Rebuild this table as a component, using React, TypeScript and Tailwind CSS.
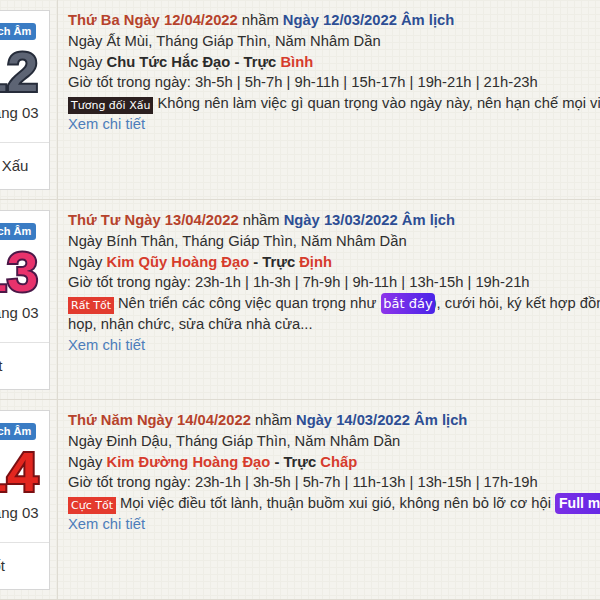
import React from "react";

type Day = {
  weekday: string;
  solar: string;
  lunar: string;
  canchi: string;
  dao: string;
  daoGood: boolean;
  truc: string;
  hours: string;
  num: string;
  numClass: string;
  verdict: string;
  badge: string;
  badgeClass: string;
  desc: React.ReactNode;
  extra?: React.ReactNode;
};

const days: Day[] = [
  {
    weekday: "Thứ Ba",
    solar: "12/04/2022",
    lunar: "12/03/2022",
    canchi: "Ngày Ất Mùi, Tháng Giáp Thìn, Năm Nhâm Dần",
    dao: "Chu Tức Hắc Đạo",
    daoGood: false,
    truc: "Bình",
    hours: "3h-5h | 5h-7h | 9h-11h | 15h-17h | 19h-21h | 21h-23h",
    num: "12",
    numClass: "text-[#5d6474] [-webkit-text-stroke:4px_#262c3a]",
    verdict: "Tương đối Xấu",
    badge: "Tương đối Xấu",
    badgeClass: "bg-[#2b1f1f]",
    desc: "Không nên làm việc gì quan trọng vào ngày này, nên hạn chế mọi việc lớn",
  },
  {
    weekday: "Thứ Tư",
    solar: "13/04/2022",
    lunar: "13/03/2022",
    canchi: "Ngày Bính Thân, Tháng Giáp Thìn, Năm Nhâm Dần",
    dao: "Kim Qũy Hoàng Đạo",
    daoGood: true,
    truc: "Định",
    hours: "23h-1h | 1h-3h | 7h-9h | 9h-11h | 13h-15h | 19h-21h",
    num: "13",
    numClass: "text-[#e8326c] [-webkit-text-stroke:4px_#4b1848]",
    verdict: "Rất Tốt",
    badge: "Rất Tốt",
    badgeClass: "bg-[#e23b2f]",
    desc: (
      <>
        Nên triển các công việc quan trọng như (
        <span className="relative ml-[-4px] inline-block rounded-[4px] bg-[linear-gradient(90deg,#8d34ea,#4a24e8)] px-[2px] text-[13px] leading-[21px] text-white font-['DejaVu_Sans',sans-serif]">
          bắt đáy
        </span>
        <span className="ml-[-3px]">)</span>, cưới hỏi, ký kết hợp đồng, hội
      </>
    ),
    extra: <div>họp, nhận chức, sửa chữa nhà cửa...</div>,
  },
  {
    weekday: "Thứ Năm",
    solar: "14/04/2022",
    lunar: "14/03/2022",
    canchi: "Ngày Đinh Dậu, Tháng Giáp Thìn, Năm Nhâm Dần",
    dao: "Kim Đường Hoàng Đạo",
    daoGood: true,
    truc: "Chấp",
    hours: "23h-1h | 3h-5h | 5h-7h | 11h-13h | 13h-15h | 17h-19h",
    num: "14",
    numClass: "text-[#e3261f] [-webkit-text-stroke:4px_#7a0f12]",
    verdict: "Cực Tốt",
    badge: "Cực Tốt",
    badgeClass: "bg-[#e43a2d]",
    desc: (
      <>
        Mọi việc điều tốt lành, thuận buồm xui gió, không nên bỏ lỡ cơ hội{" "}
        <span className="inline-block rounded-[4px] bg-[linear-gradient(90deg,#7a2fe6,#5a25e4)] px-[4px] text-[14px] font-bold leading-[21px] text-white">
          Full moon
        </span>
      </>
    ),
  },
];

function DayRow({ d }: { d: Day }) {
  return (
    <div className="flex h-[200px] border-b border-[#dedbd2]">
      {/* left date card, partly scrolled off screen */}
      <div className="w-[152px] shrink-0 border-r border-[#dedbd2] pl-[10px] pr-[8px] pt-[10px]">
        <div className="flex h-[180px] w-[134px] flex-col border border-[#d6d6d6] bg-white">
          <div className="flex h-[131px] flex-col items-center pl-[48px] pt-[12px]">
            <span className="ml-[5px] h-[17px] rounded-[3px] bg-[#3a7cc4] px-[5px] text-[11px] font-bold leading-[17px] text-white">
              Lịch Âm
            </span>
            <span
              className={`mt-[4px] text-[56px] font-bold leading-[56px] [paint-order:stroke_fill] ${d.numClass}`}
            >
              {d.num}
            </span>
            <span className="mt-[3px] text-[15px] leading-[20px] text-[#333]">Tháng 03</span>
          </div>
          <div className="flex flex-1 items-center justify-center border-t border-[#e2e2e2] pr-[10px] text-[15px] text-[#333]">
            {d.verdict}
          </div>
        </div>
      </div>

      <div className="flex-1 whitespace-nowrap pl-[10px] pt-[10px] text-[14.75px] leading-[20.8px] text-[#2f2f2f]">
        <div>
          <span className="font-bold text-[#b6422b]">
            {d.weekday} Ngày {d.solar}
          </span>{" "}
          nhầm <span className="font-bold text-[#2d4e94]">Ngày {d.lunar} Âm lịch</span>
        </div>
        <div>{d.canchi}</div>
        <div>
          Ngày{" "}
          <span className={`font-bold ${d.daoGood ? "text-[#d63b2c]" : "text-[#2b2b2b]"}`}>{d.dao}</span>
          <span className="font-bold text-[#2b2b2b]"> - Trực </span>
          <span className="font-bold text-[#d63b2c]">{d.truc}</span>
        </div>
        <div>Giờ tốt trong ngày: {d.hours}</div>
        <div>
          <span
            className={`mr-[4px] inline-block px-[3px] align-[-1px] font-['DejaVu_Sans',sans-serif] text-[11px] leading-[17px] text-white ${d.badgeClass}`}
          >
            {d.badge}
          </span>
          {d.desc}
        </div>
        {d.extra}
        <div className="text-[#4d7dba]">Xem chi tiết</div>
      </div>
    </div>
  );
}

export default function App() {
  return (
    <div className="h-[600px] w-[600px] overflow-hidden bg-[#f4f3ee] font-['Liberation_Sans',Arial,sans-serif] [background-image:linear-gradient(to_right,#eeede6_1px,transparent_1px),linear-gradient(to_bottom,#eeede6_1px,transparent_1px)] [background-size:7px_7px]">
      <div className="ml-[-94px] w-[780px]">
        {days.map((d) => (
          <DayRow key={d.solar} d={d} />
        ))}
      </div>
    </div>
  );
}
